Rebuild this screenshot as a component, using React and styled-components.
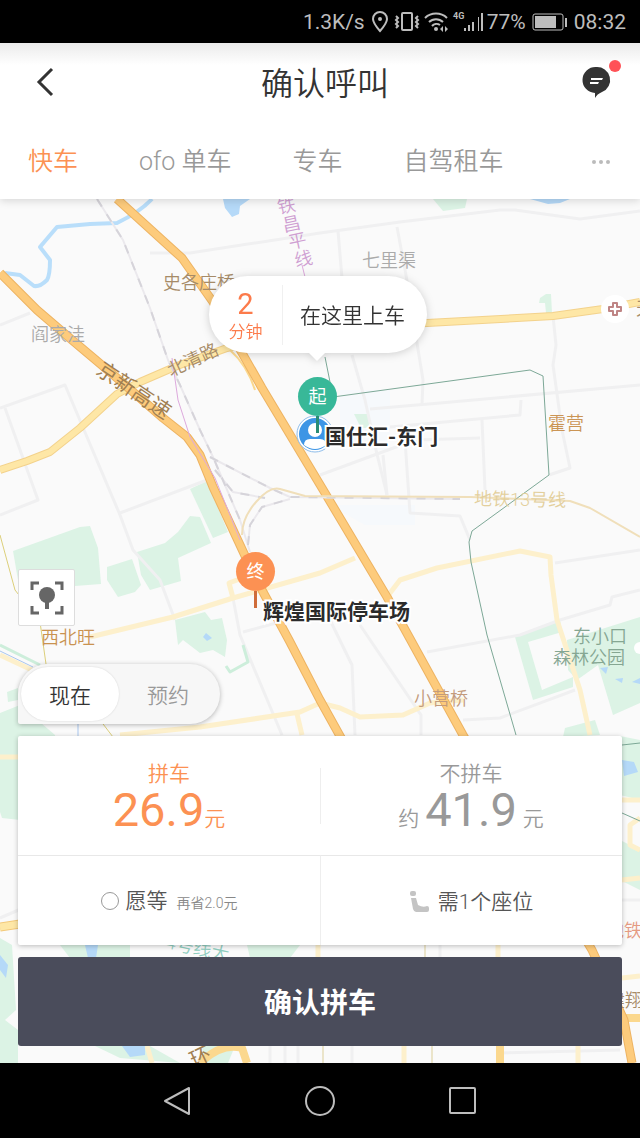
import React, { useState } from "react";
import styled, { createGlobalStyle } from "styled-components";

const GlobalStyle = createGlobalStyle`
  * {
    box-sizing: border-box;
  }
  body {
    margin: 0;
    background: #000000;
    font-family: Roboto, "Noto Sans CJK SC", sans-serif;
    font-weight: 350;
  }
  button {
    margin: 0;
    padding: 0;
    border: none;
    background: none;
    color: inherit;
    font: inherit;
    cursor: pointer;
  }
  svg {
    display: block;
  }
`;

const Screen = styled.div`
  display: flex;
  flex-direction: column;
  min-height: 100vh;
`;

const StatusBar = styled.div`
  display: flex;
  justify-content: flex-end;
  align-items: center;
  gap: 6px;
  height: 43px;
  padding-right: 14px;
  background: #000000;
  color: #bdbdbd;
  font-size: 21px;
  font-weight: 400;
`;

const Signal = styled.span`
  display: flex;
  align-items: center;
  gap: 3px;
`;

const Header = styled.header`
  position: relative;
  z-index: 2;
  background: linear-gradient(#ebebeb, #ffffff 22px);
  box-shadow: 0 2px 8px rgba(0, 0, 0, 0.14);
`;

const TitleRow = styled.div`
  display: flex;
  justify-content: space-between;
  align-items: center;
  height: 80px;
  padding: 0 18px 0 36px;
`;

const Title = styled.h1`
  margin: 0;
  padding-top: 2px;
  color: #333333;
  font-size: 32px;
  font-weight: 350;
  line-height: 40px;
`;

const IconButton = styled.button`
  display: flex;
  align-items: center;
  justify-content: ${(props) => (props.$end ? "flex-end" : "flex-start")};
  width: ${(props) => (props.$end ? 60 : 52)}px;
  height: 46px;
  padding-bottom: 2px;
`;

const Tabs = styled.nav`
  display: flex;
  align-items: center;
  gap: 61px;
  height: 76px;
  padding: 2px 30px 0 28px;
`;

const Tab = styled.a`
  color: ${(props) => (props.$active ? "#fc9153" : "#999999")};
  font-size: 25px;
  line-height: 32px;
  white-space: nowrap;
  text-decoration: none;
`;

const MoreButton = styled.button`
  margin-left: auto;
  padding: 8px 0;
`;

const Map = styled.main`
  position: relative;
  flex: 1;
  display: flex;
  flex-direction: column;
  justify-content: flex-end;
  align-items: flex-start;
  min-height: 800px;
  padding: 0 18px 17px;
  background: #fafafa;
  overflow: hidden;
`;

const MapCanvas = styled.svg`
  position: absolute;
  top: 0;
  left: 0;
  width: 100%;
  height: 100%;
`;

/* x is measured from the middle of the map */
const Pin = styled.div`
  position: absolute;
  left: calc(50% + ${(props) => props.$x}px);
  top: ${(props) => props.$y}px;
`;

const PlaceName = styled.div`
  position: absolute;
  left: 27px;
  bottom: -18px;
  color: #2b2b2b;
  font-size: 21px;
  font-weight: 700;
  line-height: 28px;
  white-space: nowrap;
  -webkit-text-stroke: 4px #ffffff;
  paint-order: stroke;
`;

const PinHead = styled.div`
  position: relative;
  width: 39px;
  height: 39px;
  border-radius: 50%;
  background: ${(props) => props.$color};
  color: #ffffff;
  font-size: 18px;
  font-weight: 400;
  line-height: 39px;
  text-align: center;
`;

const PinStem = styled.div`
  position: relative;
  width: 3px;
  height: 17px;
  margin: 0 auto;
  background: ${(props) => props.$color};
`;

const Avatar = styled.svg`
  position: absolute;
  left: -2px;
  top: 38px;
`;

const Bubble = styled.button`
  position: absolute;
  left: calc(50% - 111px);
  top: 77px;
  display: flex;
  align-items: center;
  width: 218px;
  height: 77px;
  border-radius: 39px;
  background: #ffffff;
  filter: drop-shadow(0 1px 4px rgba(0, 0, 0, 0.18));

  &:after {
    content: "";
    position: absolute;
    left: 99px;
    top: 76px;
    border: 9px solid transparent;
    border-top-color: #ffffff;
    border-bottom: none;
  }
`;

const Wait = styled.span`
  width: 74px;
  height: 60px;
  border-right: 1px solid #f0f0f0;
  color: #fc7b4b;
  font-size: 17px;
  line-height: 22px;
  text-align: center;
`;

const Minutes = styled.b`
  display: block;
  padding-top: 2px;
  font-size: 29px;
  font-weight: 400;
  line-height: 34px;
`;

const BubbleText = styled.span`
  flex: 1;
  padding: 2px 0 0 17px;
  color: #333333;
  font-size: 21px;
  line-height: 28px;
  text-align: left;
  white-space: nowrap;
`;

const LocateButton = styled.button`
  position: relative;
  display: flex;
  align-items: center;
  justify-content: center;
  width: 57px;
  height: 57px;
  margin-bottom: 38px;
  border: 1px solid #dddddd;
  border-radius: 2px;
  background: #ffffff;
`;

const TimeSwitch = styled.div`
  position: relative;
  display: flex;
  width: 202px;
  height: 60px;
  margin-bottom: 12px;
  padding: 3px;
  border-radius: 30px 30px 30px 2px;
  background: #f7f7f7;
  box-shadow: 0 1px 5px rgba(0, 0, 0, 0.28);
`;

const TimeOption = styled.button`
  flex: 1;
  border-radius: 27px;
  background: ${(props) => (props.$active ? "#ffffff" : "transparent")};
  box-shadow: ${(props) =>
    props.$active ? "0 0 2px rgba(0, 0, 0, 0.15)" : "none"};
  color: ${(props) => (props.$active ? "#333333" : "#999999")};
  font-size: 21px;
`;

const Card = styled.section`
  position: relative;
  display: grid;
  grid-template-columns: 1fr 1fr;
  grid-template-rows: 119px 90px;
  align-self: stretch;
  margin-bottom: 12px;
  border-radius: 2px;
  background: #ffffff;
  box-shadow: 0 1px 5px rgba(0, 0, 0, 0.25);
`;

const Fare = styled.button`
  padding-top: 10px;
  color: ${(props) => (props.$active ? "#fc9153" : "#999999")};
  font-size: 21px;
  line-height: 28px;

  & + & {
    background: linear-gradient(#eeeeee, #eeeeee) left center / 1px 56px
      no-repeat;
  }
`;

const FareName = styled.span`
  display: block;
`;

const Price = styled.span`
  display: flex;
  justify-content: center;
  align-items: baseline;
  gap: ${(props) => props.$gap}px;
  line-height: 44px;
`;

const Amount = styled.span`
  font-size: 47px;
  font-weight: 400;
`;

const Option = styled.div`
  display: flex;
  justify-content: center;
  align-items: center;
  padding-top: 2px;
  border-top: 1px solid #e8e8e8;
  color: #555555;
  font-size: 21px;
  line-height: 28px;

  & + & {
    border-left: 1px solid #eeeeee;
  }
`;

const WaitLabel = styled.label`
  display: flex;
  align-items: baseline;
  gap: 7px;
`;

const WaitCheck = styled.input`
  appearance: none;
  align-self: center;
  width: 18px;
  height: 18px;
  margin: 0 0 2px;
  border: 1px solid #999999;
  border-radius: 50%;

  &:checked {
    border: 5px solid #fc9153;
  }
`;

const Saving = styled.small`
  padding-left: 2px;
  color: #888888;
  font-size: 14px;
`;

const SeatButton = styled.button`
  display: flex;
  align-items: center;
  gap: 8px;
`;

const ConfirmButton = styled.button`
  position: relative;
  align-self: stretch;
  height: 89px;
  padding-bottom: 2px;
  border-radius: 3px;
  background: #4a4c5b;
  color: #ffffff;
  font-size: 28px;
  font-weight: 700;
`;

const NavBar = styled.footer`
  display: flex;
  justify-content: center;
  align-items: center;
  gap: 112px;
  height: 75px;
  background: #000000;
`;

const NavButton = styled.button`
  width: 30px;
  height: 30px;
`;

const parks = [
  "433,199 467,199 465,208 443,211",
  "539,303 540,298 546,294 551,294 552,313 546,313 545,303",
  "13,551 80,527 90,526 98,548 101,584 75,586 18,580",
  "107,567 132,559 141,585 135,592 118,597 107,580",
  "137,552 165,543 178,532 190,516 200,517 211,543 178,558 181,581 150,590 141,575",
  "190,489 207,481 228,532 213,538",
  "175,620 205,612 211,620 222,618 227,640 225,657 213,650 200,653 187,643 183,640 178,645",
  "515,637 560,620 562,632 528,642 542,690 573,677 573,687 533,700",
  "567,640 640,617 640,703 613,715 598,665 577,680 568,670",
  "7,692 18,688 18,700 8,702",
  "0,713 20,705 55,735 55,760 20,820 2,818 0,812",
  "565,728 595,720 600,735 563,737",
  "620,736 640,740 640,800 620,795",
  "620,840 640,850 640,890 620,880",
  "0,938 12,945 16,1010 5,1020 18,1030 18,1063 0,1063",
  "60,945 130,942 130,958 70,958",
  "247,945 300,945 290,958 250,958",
  "95,1046 150,1046 180,1063 120,1058",
  "202,1046 235,1046 228,1063 205,1063",
];

const water = [
  "223,199 250,199 240,206 239,214 232,217 225,208",
  "530,199 570,199 560,203 548,204",
  "203,637 206,633 212,638 207,641",
  "600,668 608,667 606,674",
  "615,679 623,678 622,683",
  "632,682 640,678 640,684",
  "622,760 634,762 638,772 624,776",
  "85,945 98,945 96,958 88,958",
  "122,1046 145,1046 145,1055 130,1057",
  "0,955 8,965 6,978 0,970",
];

const greyRoads = [
  "150,253 190,253 320,233 400,222 500,210 515,210 580,219 640,211",
  "338,231 343,290",
  "397,227 406,275 423,380 422,405",
  "352,355 365,400 376,450 387,495",
  "553,316 556,345 553,365 562,430 570,468 549,475",
  "370,409 440,403 640,385",
  "390,427 520,415 521,400",
  "320,475 415,440 480,438",
  "482,420 485,490",
  "383,455 387,495",
  "405,440 410,513 460,516 470,540",
  "0,408 65,385 120,515 133,550 160,580 175,620",
  "5,408 38,500 0,515",
  "0,325 30,313",
  "120,513 207,480",
  "233,598 240,635 282,735",
  "243,632 280,622 300,600",
  "330,620 352,665 355,735",
  "360,625 421,715 421,735",
  "427,652 520,635 560,620 610,605 612,597 640,590",
  "463,720 500,718 575,690",
  "555,563 640,550",
  "0,918 30,905",
  "620,900 640,900",
  "270,1046 270,1063",
  "285,1046 285,1063",
  "298,1046 298,1063",
  "352,1046 352,1063",
  "500,1053 620,1050",
  "440,945 440,957",
];

const yellowRoads = [
  "90,637 173,617 233,598 320,573 355,558",
  "233,598 229,583 245,577",
  "387,597 400,580 437,568 520,551 550,557 551,575 557,620 580,690 590,735",
  "120,735 200,727 300,712 320,703 340,708 360,717 403,715 430,703 463,700",
  "297,714 302,735",
  "0,655 32,670",
  "0,757 18,757",
  "622,800 640,800",
  "640,818 630,825 630,845 640,850",
  "622,880 640,878",
  "318,945 318,957",
  "498,945 498,957",
  "147,1046 152,1063",
  "404,1046 404,1063",
  "578,1046 578,1063",
  "622,978 640,976",
];

const highwayA =
  "117,199 182,258 213,302 262,388 325,493 387,597 463,735 592,950 624,1020 632,1063";
const highwayB =
  "0,273 37,310 72,340 110,372 163,418 187,437 200,455 213,487 247,560 263,592 290,642 320,700 345,745";
const beiqing =
  "0,470 27,461 50,452 80,428 117,394 140,382 177,366 227,348 300,330 427,323 553,316 603,309 640,302";

const MapDrawing = () => (
  <MapCanvas
    viewBox="0 199 640 864"
    preserveAspectRatio="xMidYMin slice"
    fill="none"
    strokeLinejoin="round"
  >
    {parks.map((points) => (
      <polygon key={points} points={points} fill="#dcf3e5" />
    ))}
    <path d="M340 390h50v60h-50zM330 505h85v20h-50z" fill="#f6f9fc" />
    <path d="M354 414h15v14h-8z" fill="#dcf3e5" />
    {water.map((points) => (
      <polygon key={points} points={points} fill="#b5d9f8" />
    ))}
    {greyRoads.map((points) => (
      <polyline key={points} points={points} stroke="#f0f0f1" strokeWidth="3" />
    ))}
    {yellowRoads.map((points) => (
      <polyline key={points} points={points} stroke="#fdf0cc" strokeWidth="5" />
    ))}
    <path
      d="M152 199 Q140 212 117 223 L90 224 57 227 40 247 50 260Q50 275 47 280 40 287 34 286L20 275 5 273"
      stroke="#b9defa"
      strokeWidth="4"
    />
    <path d="M0 645 40 665M243 645l5 17-18 10-4-6" stroke="#cdeedb" strokeWidth="3" />
    <path d="M0 651 33 667M78 720v16" stroke="#a9c6ee" />
    <path d="M0 535 15 590 40 622 46 664M100 720l13 17" stroke="#dccf7a" strokeWidth="1" />

    <polyline points={beiqing} stroke="#f3d28c" strokeWidth="8" />
    <polyline points={beiqing} stroke="#fee7a6" strokeWidth="6" />
    <path d="M230 350 Q247 365 255 390" stroke="#fbd88e" strokeWidth="2" />
    <path d="M0 927 20 924" stroke="#f3c97a" strokeWidth="9" />
    <path d="M0 927 20 924" stroke="#fee7a6" strokeWidth="7" />
    <path
      d="M200 1063 Q222 1042 242 1048 L247 1063M500 1046v17M622 1018h18"
      stroke="#fbd88e"
      strokeWidth="8"
    />
    <path d="M323 1046v17M432 1046v17M425 945v12" stroke="#dccf9a" />

    <polyline points={highwayB} stroke="#edb362" strokeWidth="9" />
    <polyline points={highwayB} stroke="#fdcb7c" strokeWidth="7" />
    <polyline points={highwayA} stroke="#edb362" strokeWidth="9" />
    <polyline points={highwayA} stroke="#fdcb7c" strokeWidth="7" />

    {/* railways and metro */}
    <path
      d="M97 199 123 240 150 308 168 360 180 385 200 430 213 457 240 520 250 552M210 457 270 488 290 497 460 499M215 470 233 492 265 498M248 545 250 525 262 507 290 499"
      stroke="#ebe9ed"
      strokeWidth="2"
    />
    <path
      d="M97 199 123 240 150 308 168 360 180 385 200 430 213 457 240 520M210 457 270 488 290 497 460 499M215 470 233 492 265 498M248 545 250 525 262 507 290 499"
      stroke="#d6d4da"
      strokeWidth="2"
      strokeDasharray="9 9"
    />
    <path
      d="M242 535 Q242 518 256 502 T280 489 L305 496 470 497 570 501 590 508 640 537"
      stroke="#f0dfba"
      strokeWidth="2"
    />
    <path d="M172 358 178 400 190 437 215 478 240 540M302 265l3 12" stroke="#dda9dd" />
    <path
      d="M325 357 333 397 530 370 543 376 549 475 472 531 469 542 471 562 487 635 516 735M622 813l18 8M622 745l18-2"
      stroke="#7da897"
    />

    <circle cx="615" cy="309" r="14" fill="#ffffff" />
    <path
      d="M613 303h4v4h4v4h-4v4h-4v-4h-4v-4h4z"
      stroke="#bf8585"
      strokeWidth="2"
    />
    <circle cx="640" cy="648" r="6" fill="#ffffff" />

    <g fontSize="18">
      <g fill="#aaaaaa">
        <text x="362" y="267">七里渠</text>
        <text x="31" y="341">阎家洼</text>
      </g>
      <g fill="#a68b68">
        <text x="163" y="289">史各庄桥</text>
        <text transform="translate(171 377) rotate(-25)">北清路</text>
        <text x="636" y="315">天</text>
        <text x="607" y="1007">建翔</text>
      </g>
      <g fill="#cf9fd2">
        <text transform="translate(279 214) rotate(-12)">铁</text>
        <text transform="translate(284 232) rotate(-12)">昌</text>
        <text transform="translate(290 249) rotate(-12)">平</text>
        <text transform="translate(296 267) rotate(-12)">线</text>
      </g>
      <text x="548" y="430" fill="#cb9555">霍营</text>
      <text x="414" y="705" fill="#c39b7c">小营桥</text>
      <text x="41" y="644" fill="#c99250">西北旺</text>
      <g fill="#85a692">
        <text x="573" y="643">东小口</text>
        <text x="553" y="664">森林公园</text>
      </g>
      <text x="606" y="937" fill="#e59b82">地铁</text>
      <text transform="translate(474 505) rotate(1)" fill="#e3cf9c">地铁13号线</text>
      <text transform="translate(165 948) rotate(12)" fill="#8fcdbf">4号线大</text>
    </g>
    <g fontSize="21" fontWeight="400" fill="#a17f51">
      <text transform="translate(95 373) rotate(34)">京新高速</text>
      <text transform="translate(194 1068) rotate(-25)">环</text>
    </g>
  </MapCanvas>
);

const StatusIcons = () => (
  <svg width="104" height="24" viewBox="0 0 104 24" fill="none" stroke="#bdbdbd" strokeWidth="2">
    <path d="M9 21 Q2 13 2 9a7 7 0 0 1 14 0q0 4-7 12z" />
    <circle cx="9" cy="9" r="2" fill="#bdbdbd" stroke="none" />
    <rect x="31" y="3" width="10" height="17" rx="1" />
    <path d="M25 6l2 2-2 2 2 2-2 2 2 2-2 2M47 6l-2 2 2 2-2 2 2 2-2 2 2 2" />
    <path d="M54 8a16 16 0 0 1 22 0M58 12a10 10 0 0 1 14 0M61 16a6 6 0 0 1 8-1" />
    <circle cx="65" cy="19" r="2" fill="#bdbdbd" stroke="none" />
    <path d="M72 16v6l-3-3zM74 16v6l3-3z" fill="#bdbdbd" stroke="none" />
    <text x="82" y="9" fill="#bdbdbd" stroke="none" fontSize="9" fontWeight="700">4G</text>
    <path d="M94 21v-3M98 21v-6M102 21V12" />
  </svg>
);

const SignalBars = () => (
  <svg width="6" height="24" viewBox="0 0 6 24" stroke="#bdbdbd" strokeWidth="2">
    <path d="M0 21V7M4 21V3" />
  </svg>
);

const Battery = () => (
  <svg width="36" height="18" viewBox="0 0 36 18" fill="none" stroke="#bdbdbd">
    <rect x="1" y="1" width="30" height="16" rx="2" />
    <path d="M3 3h21v12H3z" fill="#bdbdbd" stroke="none" />
    <path d="M34 5v9" strokeWidth="2" />
  </svg>
);

const App = () => {
  const [booking, setBooking] = useState(false);
  const [carpool, setCarpool] = useState(true);

  return (
    <>
      <GlobalStyle />
      <Screen>
        <StatusBar>
          <span>1.3K/s</span>
          <Signal>
            <StatusIcons />
            <SignalBars />
            <span>77%</span>
          </Signal>
          <Battery />
          <span>08:32</span>
        </StatusBar>

        <Header>
          <TitleRow>
            <IconButton aria-label="返回">
              <svg width="18" height="30" viewBox="0 0 18 30">
                <path d="M16 2 3 15l13 13" fill="none" stroke="#333333" strokeWidth="3" />
              </svg>
            </IconButton>
            <Title>确认呼叫</Title>
            <IconButton $end aria-label="消息">
              <svg width="46" height="44" viewBox="0 0 46 44">
                <path
                  d="M20 7a13 13 0 0 1 6 25q-5 2-7 6v-5A13 13 0 0 1 20 7z"
                  fill="#333333"
                />
                <path d="M15 18h12l-1 2H15zM14 22h9l-1 2H14z" fill="#ffffff" />
                <circle cx="39" cy="6" r="6" fill="#ff5257" />
              </svg>
            </IconButton>
          </TitleRow>
          <Tabs>
            <Tab href="#kuaiche" $active>快车</Tab>
            <Tab href="#ofo">ofo 单车</Tab>
            <Tab href="#zhuanche">专车</Tab>
            <Tab href="#zijia">自驾租车</Tab>
            <MoreButton aria-label="更多">
              <svg width="18" height="4" viewBox="0 0 18 4" fill="#bbbbbb">
                <circle cx="2" cy="2" r="2" />
                <circle cx="9" cy="2" r="2" />
                <circle cx="16" cy="2" r="2" />
              </svg>
            </MoreButton>
          </Tabs>
        </Header>

        <Map>
          <MapDrawing />

          <Pin $x={-22} $y={178}>
            <Avatar width="38" height="38" viewBox="0 0 38 38">
              <circle cx="19" cy="19" r="18" fill="#ffffff" stroke="#8fbdea" />
              <circle cx="19" cy="19" r="16" fill="#3d95e5" />
              <circle cx="19" cy="15" r="7" fill="#ffffff" />
              <path d="M8 30q0-6 6-6h10q6 0 6 6-11 8-22 0z" fill="#ffffff" />
            </Avatar>
            <PinHead $color="#38b898">起</PinHead>
            <PinStem $color="#2a8c76" />
            <PlaceName>国仕汇-东门</PlaceName>
          </Pin>

          <Pin $x={-84} $y={353}>
            <PinHead $color="#fc9153">终</PinHead>
            <PinStem $color="#cf6c3a" />
            <PlaceName>辉煌国际停车场</PlaceName>
          </Pin>

          <Bubble>
            <Wait>
              <Minutes>2</Minutes>
              分钟
            </Wait>
            <BubbleText>在这里上车</BubbleText>
          </Bubble>

          <LocateButton aria-label="定位">
            <svg width="34" height="34" viewBox="0 0 34 34" fill="none" stroke="#666666">
              <path
                d="M2 9V2h7M25 2h7v7M32 25v7h-7M9 32H2v-7"
                strokeWidth="3"
              />
              <path d="M17 20v8" strokeWidth="4" />
              <circle cx="17" cy="14" r="8" fill="#666666" stroke="none" />
            </svg>
          </LocateButton>

          <TimeSwitch>
            <TimeOption $active={!booking} onClick={() => setBooking(false)}>
              现在
            </TimeOption>
            <TimeOption $active={booking} onClick={() => setBooking(true)}>
              预约
            </TimeOption>
          </TimeSwitch>

          <Card>
            <Fare $active={carpool} onClick={() => setCarpool(true)}>
              <FareName>拼车</FareName>
              <Price $gap={0}>
                <Amount>26.9</Amount>元
              </Price>
            </Fare>
            <Fare $active={!carpool} onClick={() => setCarpool(false)}>
              <FareName>不拼车</FareName>
              <Price $gap={6}>
                约<Amount>41.9</Amount>元
              </Price>
            </Fare>
            <Option>
              <WaitLabel>
                <WaitCheck type="checkbox" />
                愿等
                <Saving>再省2.0元</Saving>
              </WaitLabel>
            </Option>
            <Option>
              <SeatButton>
                <svg width="20" height="22" viewBox="0 0 20 22" fill="#c4c4c4">
                  <rect x="0" y="0" width="6" height="5" rx="2" />
                  <path d="M1 7h5l2 7q5 3 9 1 2 0 2 2v2q0 2-2 2H6q-2 0-3-3z" />
                </svg>
                需1个座位
              </SeatButton>
            </Option>
          </Card>

          <ConfirmButton>确认拼车</ConfirmButton>
        </Map>

        <NavBar>
          <NavButton aria-label="后退">
            <svg width="30" height="30" viewBox="0 0 30 30" fill="none" stroke="#bdbdbd" strokeWidth="2">
              <path d="M2 15 26 2v26z" strokeLinejoin="round" />
            </svg>
          </NavButton>
          <NavButton aria-label="主页">
            <svg width="30" height="30" viewBox="0 0 30 30" fill="none" stroke="#bdbdbd" strokeWidth="2">
              <circle cx="15" cy="15" r="14" />
            </svg>
          </NavButton>
          <NavButton aria-label="最近任务">
            <svg width="30" height="30" viewBox="0 0 30 30" fill="none" stroke="#bdbdbd" strokeWidth="2">
              <rect x="3" y="2" width="25" height="25" rx="1" />
            </svg>
          </NavButton>
        </NavBar>
      </Screen>
    </>
  );
};

export default App;
